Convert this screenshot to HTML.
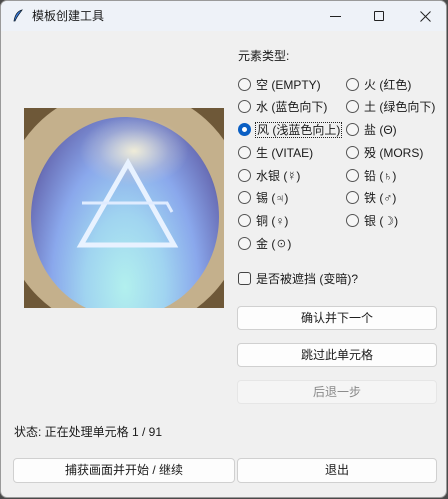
<!DOCTYPE html>
<html><head><meta charset="utf-8"><style>
*{margin:0;padding:0;box-sizing:border-box}
body{width:448px;height:499px;background:#4a4a4a;overflow:hidden;font-family:"Liberation Sans","Noto Sans CJK SC",sans-serif;font-size:12px;color:#1a1a1a}
.win{position:absolute;left:0;top:0;width:447px;height:498px;background:#f0f0f0;border-radius:7px;overflow:hidden;border:1px solid #9a9a9a}
.tb{position:absolute;left:0;top:0;width:100%;height:30px;background:#eef2f8}
.t{position:absolute;white-space:nowrap;line-height:14px}
.r{position:absolute;width:13px;height:13px;border:1px solid #555;border-radius:50%;background:#f6f6f6}
.btn{position:absolute;background:#fdfdfd;border:1px solid #d0d0d0;border-radius:4px;text-align:center;line-height:22px;font-size:12px}
.img{position:absolute;left:23px;top:107px;width:200px;height:200px;background:#6e5838;overflow:hidden}
</style></head><body><div class="win">
<div class="tb">
<svg style="position:absolute;left:11px;top:8px" width="12" height="14" viewBox="0 0 12 14"><path d="M10 1 C6 2 3 6 2 12 L3 12 C5 7 8 4 10 1Z" fill="#3b7de0" stroke="#123" stroke-width="0.8"/></svg>
<div class="t" style="left:31px;top:8px;font-size:12px">模板创建工具</div>
<div style="position:absolute;left:329px;top:15px;width:11px;height:1px;background:#222"></div>
<div style="position:absolute;left:373px;top:10px;width:10px;height:10px;border:1px solid #222;border-radius:1px"></div>
<svg style="position:absolute;left:419px;top:10px" width="11" height="11"><path d="M0.5 0.5L10.5 10.5M10.5 0.5L0.5 10.5" stroke="#222" stroke-width="1"/></svg>
</div>
<div class="img">
<div style="position:absolute;left:-22px;top:-20px;width:244px;height:244px;border-radius:50%;background:radial-gradient(circle,#c4b08c 70%,#9c8460 88%,#6e5838 100%)"></div>
<div style="position:absolute;left:7px;top:9px;width:188px;height:200px;border-radius:50%;background:radial-gradient(ellipse at 50% 85%,#b2f0ee 0%,#a0d4f0 30%,#8aa8ec 55%,#6a70b8 78%,#2e2c48 95%)"></div>
<div style="position:absolute;left:55px;top:8px;width:110px;height:70px;border-radius:50%;background:radial-gradient(ellipse,rgba(245,240,215,.95),rgba(200,200,210,.4) 45%,rgba(200,200,210,0) 70%)"></div>
<svg style="position:absolute;left:0;top:0" width="200" height="200"><path d="M104 55 L57 137 L150 137 Z" fill="none" stroke="#e8f2ff" stroke-width="5" stroke-linejoin="miter"/><path d="M58 95 L143 95 L148 104" fill="none" stroke="#e0ecff" stroke-width="3"/></svg>
</div>
<div class="t" style="left:237px;top:48px">元素类型:</div>
<div class="r" style="left:237px;top:77px"></div><div class="t" style="left:255px;top:77px">空 (EMPTY)</div>
<div class="r" style="left:345px;top:77px"></div><div class="t" style="left:363px;top:77px">火 (红色)</div>
<div class="r" style="left:237px;top:99px"></div><div class="t" style="left:255px;top:99px">水 (蓝色向下)</div>
<div class="r" style="left:345px;top:99px"></div><div class="t" style="left:363px;top:99px">土 (绿色向下)</div>
<div class="r" style="left:237px;top:122px;border:4px solid #0a5fc4;background:#fff"></div><div class="t" style="left:254px;top:121px;border:1px dotted #222;padding:0 1px">风 (浅蓝色向上)</div>
<div class="r" style="left:345px;top:122px"></div><div class="t" style="left:363px;top:122px">盐 (Θ)</div>
<div class="r" style="left:237px;top:145px"></div><div class="t" style="left:255px;top:145px">生 (VITAE)</div>
<div class="r" style="left:345px;top:145px"></div><div class="t" style="left:363px;top:145px">殁 (MORS)</div>
<div class="r" style="left:237px;top:168px"></div><div class="t" style="left:255px;top:168px">水银 (☿)</div>
<div class="r" style="left:345px;top:168px"></div><div class="t" style="left:363px;top:168px">铅 (♄)</div>
<div class="r" style="left:237px;top:190px"></div><div class="t" style="left:255px;top:190px">锡 (♃)</div>
<div class="r" style="left:345px;top:190px"></div><div class="t" style="left:363px;top:190px">铁 (♂)</div>
<div class="r" style="left:237px;top:213px"></div><div class="t" style="left:255px;top:213px">铜 (♀)</div>
<div class="r" style="left:345px;top:213px"></div><div class="t" style="left:363px;top:213px">银 (☽)</div>
<div class="r" style="left:237px;top:236px"></div><div class="t" style="left:255px;top:236px">金 (☉)</div>
<div style="position:absolute;left:237px;top:271px;width:13px;height:13px;border:1px solid #444;border-radius:3px;background:#f6f6f6"></div>
<div class="t" style="left:255px;top:271px">是否被遮挡 (变暗)?</div>
<div class="btn" style="left:236px;top:305px;width:200px;height:24px">确认并下一个</div>
<div class="btn" style="left:236px;top:342px;width:200px;height:24px">跳过此单元格</div>
<div class="btn" style="left:236px;top:379px;width:200px;height:24px;background:#f5f5f5;border-color:#e6e6e6;color:#8a8a8a">后退一步</div>
<div class="t" style="left:13px;top:424px">状态: 正在处理单元格 1 / 91</div>
<div class="btn" style="left:12px;top:457px;width:222px;height:25px">捕获画面并开始 / 继续</div>
<div class="btn" style="left:236px;top:457px;width:200px;height:25px">退出</div>
</div></body></html>
